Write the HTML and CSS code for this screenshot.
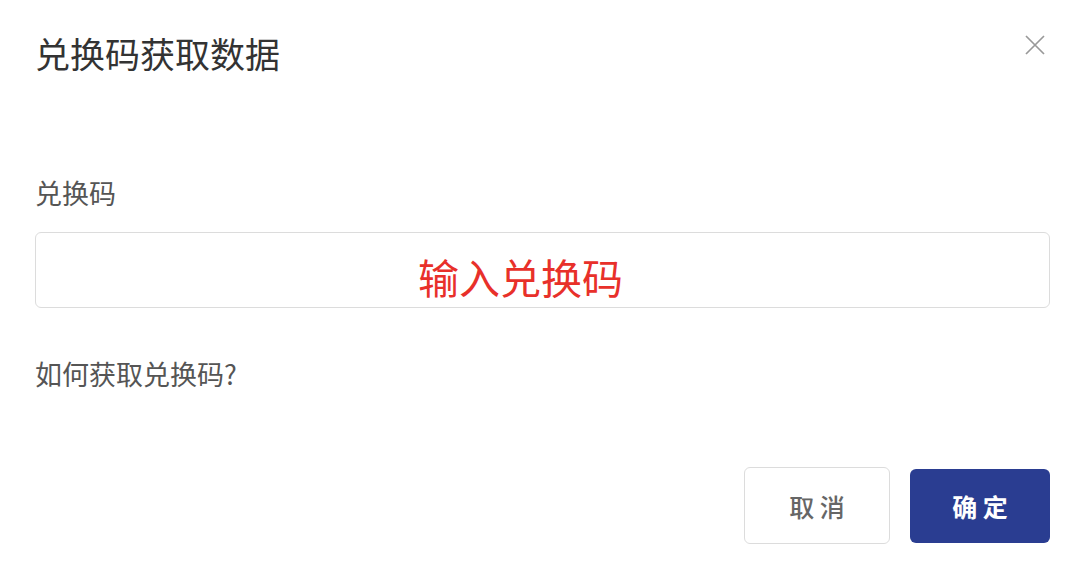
FILE: index.html
```html
<!DOCTYPE html>
<html lang="zh">
<head>
  <meta charset="UTF-8">
  <title>兑换码获取数据</title>
  <link rel="stylesheet" href="styles.css">
</head>
<body>
  <div class="dialog">
    <header class="dialog-header">
      <h2 class="dialog-title">兑换码获取数据</h2>
      <button class="close-btn" aria-label="关闭">
        <svg width="22" height="22" viewBox="0 0 22 22">
          <path d="M2 2 L20 20 M20 2 L2 20" stroke="#999" stroke-width="1.7" fill="none"/>
        </svg>
      </button>
    </header>

    <div class="form-item">
      <label class="form-label" for="code">兑换码</label>
      <div class="code-input" id="code">
        <span class="code-hint">输入兑换码</span>
      </div>
    </div>

    <p class="help-link">如何获取兑换码?</p>

    <footer class="dialog-footer">
      <button class="btn btn-cancel">取 消</button>
      <button class="btn btn-ok">确 定</button>
    </footer>
  </div>
</body>
</html>
```

FILE: styles.css
```css
:root {
  --primary-color: #2a3d91;
  --border-color: #dcdcdc;
  --title-color: #333;
  --text-color: #555;
  --hint-color: #e8302a;
}
body {
  margin: 0;
  background: #fff;
  font-family: "Noto Sans CJK SC", "Noto Sans", sans-serif;
  color: var(--text-color);
}
.dialog {
  padding: 28px 30px 0 35px;
}
.dialog-header {
  display: flex;
  justify-content: space-between;
  align-items: flex-start;
}
.dialog-title {
  margin: 0;
  font-size: 35px;
  font-weight: normal;
  line-height: 50px;
  color: var(--title-color);
}
.close-btn {
  background: none;
  border: none;
  padding: 0;
  margin-top: 6px;
  margin-right: 4px;
  cursor: pointer;
}
.form-item {
  margin-top: 96px;
}
.form-label {
  display: block;
  font-size: 27px;
  line-height: 38px;
  color: var(--text-color);
}
.code-input {
  margin-top: 20px;
  height: 76px;
  border: 1px solid var(--border-color);
  border-radius: 6px;
  display: flex;
  align-items: center;
  padding: 12px 0 0 382px;
  box-sizing: border-box;
}
.code-hint {
  font-size: 41px;
  color: var(--hint-color);
}
.help-link {
  margin: 47px 0 0;
  font-size: 27px;
  line-height: 38px;
  color: var(--text-color);
}
.dialog-footer {
  display: flex;
  justify-content: flex-end;
  align-items: center;
  gap: 20px;
  margin-top: 74px;
}
.btn {
  font-family: inherit;
  font-size: 25px;
  border-radius: 6px;
  cursor: pointer;
}
.btn-cancel {
  width: 146px;
  height: 77px;
  background: #fff;
  border: 1px solid var(--border-color);
  color: #666;
  font-weight: 500;
}
.btn-ok {
  width: 140px;
  height: 74px;
  background: var(--primary-color);
  border: none;
  color: #fff;
  font-weight: bold;
}
```
